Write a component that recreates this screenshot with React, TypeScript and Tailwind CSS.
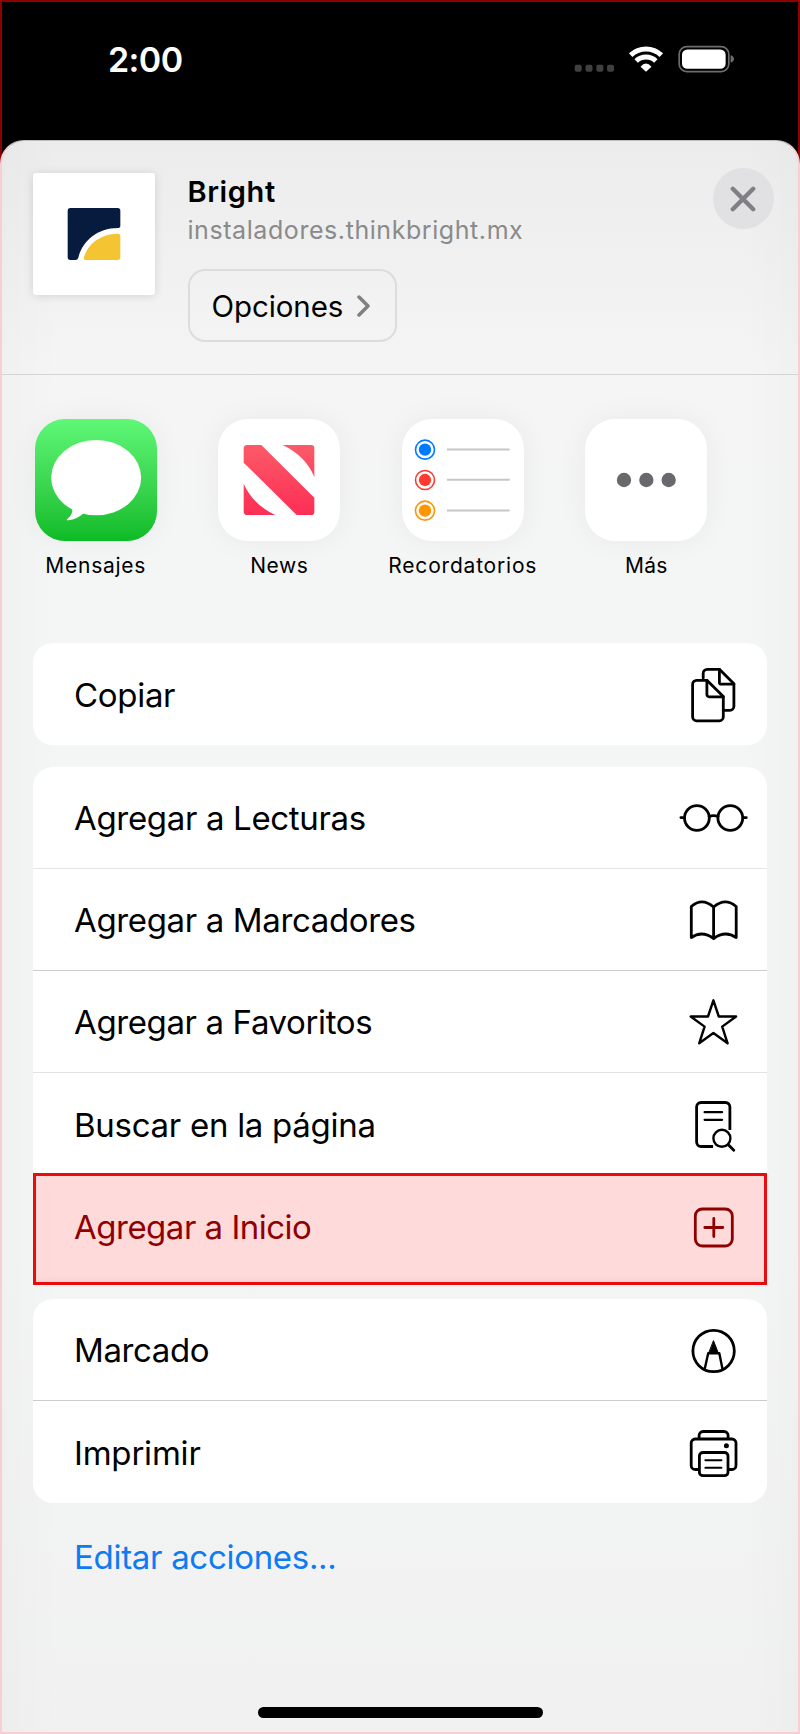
import type { ReactNode } from "react";

function StatusIcons() {
  return (
    <svg viewBox="515 130 495 95" className="mt-[41.3px] h-[31.67px] w-[165px]" fill="none">
      {[523, 555.5, 588, 620].map((x) => (
        <rect key={x} x={x} y="195" width="21" height="21" rx="6" fill="#404040" />
      ))}
      <path d="M691 166.5a66 66 0 0 1 92 0" stroke="#fff" strokeWidth="15" />
      <path d="M707.5 184a43 43 0 0 1 59 0" stroke="#fff" strokeWidth="15" />
      <path d="M737 216.5L720.5 201Q737 182 753.5 201Z" fill="#fff" />
      <rect x="836.5" y="141" width="149" height="75" rx="23" stroke="#6c6c6c" strokeWidth="5" />
      <rect x="845" y="149.5" width="131" height="58" rx="16" fill="#fff" />
      <path d="M991 167q10 3 10 11t-10 11Z" fill="#6c6c6c" />
    </svg>
  );
}

function Logo() {
  return (
    <svg viewBox="98 519 366 366" className="size-full">
      <path
        fill="#071b3f"
        d="M210 624H352a8 8 0 0 1 8 8V677q0 7-8 7C290 684 245 725 234 773q-2 7-9 7H210a8 8 0 0 1-8-8V632a8 8 0 0 1 8-8Z"
      />
      <path
        fill="#f5c433"
        d="M352 701a8 8 0 0 1 8 8V772a8 8 0 0 1-8 8H256q-7 0-5-8C262 732 300 702 352 701Z"
      />
    </svg>
  );
}

function MessagesIcon() {
  return (
    <svg viewBox="105 57 365 366" className="size-full" fill="#fff">
      <ellipse cx="288" cy="233" rx="135" ry="113" />
      <path d="M217 322Q219 344 200 358Q199 361 204 361Q232 357 252 338Z" />
    </svg>
  );
}

function NewsIcon() {
  return (
    <svg viewBox="656 57 366 366" className="size-full">
      <defs>
        <linearGradient id="news" gradientUnits="userSpaceOnUse" x1="0" y1="135" x2="0" y2="345">
          <stop stopColor="#fb5a68" />
          <stop offset="1" stopColor="#fd2e55" />
        </linearGradient>
      </defs>
      <g fill="url(#news)">
        <path d="M744 135H786L945 293V335a10 10 0 0 1-10 10H892L733 188V145a10 10 0 0 1 11-10Z" />
        <path d="M850 135H935a10 10 0 0 1 10 10V231Q919 168 850 135Z" />
        <path d="M733 251Q762 315 828 345H744a10 10 0 0 1-11-10Z" />
      </g>
    </svg>
  );
}

const REMINDERS = [
  { y: 149, color: "#007aff" },
  { y: 240, color: "#ff3b30" },
  { y: 332, color: "#ff9500" },
];

function RemindersIcon() {
  return (
    <svg viewBox="67 57 366 366" className="size-full" fill="none">
      {REMINDERS.map(({ y, color }) => (
        <g key={y}>
          <circle cx="136" cy={y} r="28.5" stroke={color} strokeWidth="4.8" />
          <circle cx="136" cy={y} r="18.5" fill={color} />
          <path d={`M202 ${y - 0.5}H390`} stroke="#c6c6c8" strokeWidth="6" />
        </g>
      ))}
    </svg>
  );
}

function MoreIcon() {
  return (
    <svg viewBox="617 57 366 366" className="size-full" fill="#68686d">
      <circle cx="734" cy="240" r="21.5" />
      <circle cx="801" cy="240" r="21.5" />
      <circle cx="868" cy="240" r="21.5" />
    </svg>
  );
}

function Glyph({ box, children }: { box: string; children: ReactNode }) {
  return (
    <svg
      viewBox={box}
      className="h-[60px] w-[72px] shrink-0"
      fill="none"
      stroke="currentColor"
      strokeWidth="2.8"
      strokeLinecap="round"
      strokeLinejoin="round"
    >
      {children}
    </svg>
  );
}

const copyIcon = (
  <Glyph box="678.4 664 72 60">
    <path d="M697 680.3H707.3L723.7 696.5V716.8a4 4 0 0 1-4 4H697a4 4 0 0 1-4-4V684.3a4 4 0 0 1 4-4Z" />
    <path d="M707.3 680.3V694.5a2.3 2.3 0 0 0 2.3 2.3H723.7" />
    <path d="M703.6 678V673.3a4 4 0 0 1 4-4H719.8L734.3 683.8V706.3a4 4 0 0 1-4 4H725" />
    <path d="M719.8 669.3V682.2a2 2 0 0 0 2 2H734.3" />
  </Glyph>
);

const glassesIcon = (
  <Glyph box="678.4 788 72 60">
    <circle cx="697.3" cy="818" r="12.4" />
    <circle cx="730.7" cy="818" r="12.4" />
    <path d="M709.5 816.5Q714 814.6 718.5 816.5M681.3 817.6H684.5M743.5 817.6H746.7" />
  </Glyph>
);

const bookIcon = (
  <Glyph box="678.4 890 72 60">
    <path d="M691.7 906.5Q702.5 897 714 907Q725.5 897 736.6 906.5V937.5Q725.5 930 714 938.5Q702.5 930 691.7 937.5ZM714 907V938.5" />
  </Glyph>
);

const starIcon = (
  <Glyph box="678.2 992 72 60">
    <path
      strokeWidth="2.4"
      d="M713.6 1000.3L719 1016.5H736.3L722.4 1026.6L727.8 1043.3L713.6 1033L699.4 1043.3L704.8 1026.6L690.9 1016.5H708.2Z"
    />
  </Glyph>
);

const findIcon = (
  <Glyph box="678.4 1094 72 60">
    <path
      strokeLinecap="butt"
      d="M730.3 1130V1107a4.5 4.5 0 0 0-4.5-4.5H701.5a4.5 4.5 0 0 0-4.500 4.5V1142a4.500 4.500 0 0 0 4.500 4.500H713.500"
    />
    <path strokeWidth="2.2" d="M705 1112.2H722.5M705 1119.8H722.5" />
    <circle cx="722.3" cy="1138.3" r="8.5" strokeWidth="2.4" />
    <path d="M728.7 1144.7L734.2 1150.3" />
  </Glyph>
);

const addIcon = (
  <Glyph box="678.2 1197 72 60">
    <rect x="695.5" y="1209" width="37" height="37" rx="7" />
    <path d="M705 1227.5H723M714 1218.5V1236.5" />
  </Glyph>
);

const markupIcon = (
  <Glyph box="678.4 1320 72 60">
    <circle cx="714" cy="1351" r="20.700" />
    <path strokeWidth="1" fill="currentColor" d="M714 1341L718.9 1353.5H709.2Z" />
    <path strokeLinecap="butt" strokeWidth="2.4" d="M705 1369.5L708.6 1353.2H719.7L723 1369.5" />
  </Glyph>
);

const printIcon = (
  <Glyph box="678.4 1422 72 60">
    <path d="M699.5 1438V1435.5a4 4 0 0 1 4-4H724.5a4 4 0 0 1 4 4V1438" />
    <path d="M698.5 1469.5H695.6a4 4 0 0 1-4-4V1443a4 4 0 0 1 4-4H732.4a4 4 0 0 1 4 4V1465.5a4 4 0 0 1-4 4H729.5" />
    <rect x="699.8" y="1452.5" width="28.6" height="23.2" rx="3.500" />
    <path strokeWidth="2" d="M705.8 1460.2H721.8M705.8 1467.7H721.8" />
    <circle cx="726.8" cy="1445.8" r="2.500" fill="currentColor" stroke="none" />
  </Glyph>
);

function Row({
  label,
  icon,
  className,
  inset = "pl-[41px] pr-[17px]",
}: {
  label: string;
  icon: ReactNode;
  className: string;
  inset?: string;
}) {
  return (
    <div className={`flex items-center justify-between text-[33px] ${inset} ${className}`}>
      <span className="pt-px leading-[40px] whitespace-nowrap">{label}</span>
      {icon}
    </div>
  );
}

function AppTile({ label, tracking, bg, children }: { label: string; tracking: string; bg: string; children: ReactNode }) {
  return (
    <div className="flex w-[183.5px] flex-col items-center">
      <div className={`size-[122px] overflow-hidden rounded-[30px] shadow-[0_0_30px_rgba(0,0,0,0.05)] ${bg}`}>
        {children}
      </div>
      <span className={`mt-[11px] text-[21px] leading-[28px] ${tracking}`}>{label}</span>
    </div>
  );
}

export default function App() {
  return (
    <div className="flex h-[1734px] w-[800px] flex-col overflow-hidden bg-[linear-gradient(to_right,#8f0000_2px,#000_2px,#000_798px,#8f0000_798px)] font-['Inter',sans-serif] text-black">
      <header className="flex h-[140px] shrink-0 items-start justify-between border-t-2 border-[#8f0000] pr-[63.3px] pl-[108px]">
        <span className="mt-[38px] text-[34px] leading-[40px] font-semibold tracking-[-0.6px] text-white">2:00</span>
        <StatusIcons />
      </header>

      <main className="flex flex-1 flex-col rounded-t-[24px] border-x-2 border-t border-b-2 border-[#f8cfd0] border-t-[#bdbdbd] bg-[linear-gradient(to_right,rgba(0,0,0,0.015),transparent_7%,transparent_93%,rgba(0,0,0,0.015)),linear-gradient(to_bottom,#ececec,#f5f5f5_240px,#f4f5f5_1100px,#f0f1f0)]">
        <section className="flex h-[234px] items-start border-b border-[#d4d4d5] pt-[32px] pr-[24.5px] pl-[30.5px]">
          <div className="size-[122px] shrink-0 rounded-[3px] bg-white shadow-[0_1px_10px_rgba(0,0,0,0.13)]">
            <Logo />
          </div>
          <div className="ml-[33px] flex flex-1 flex-col items-start">
            <h1 className="mt-px text-[29px] leading-[36px] font-semibold tracking-[0.6px]">Bright</h1>
            <p className="mt-[4px] text-[25px] leading-[32px] tracking-[0.57px] text-[#8a8a8b]">instaladores.thinkbright.mx</p>
            <button className="mt-[23px] flex h-[73px] w-[209px] items-center rounded-[17px] border-2 border-[#dcdcdc] pl-[22px]">
              <span className="pt-px text-[29.5px] leading-[40px] tracking-[-0.1px]">Opciones</span>
              <svg viewBox="0 0 14 22" className="ml-[13.5px] h-[22px] w-[14px]" fill="none" stroke="#808081" strokeWidth="3.5" strokeLinecap="round" strokeLinejoin="round">
                <path d="M2 2L11 11L2 20" />
              </svg>
            </button>
          </div>
          <button aria-label="Cerrar" className="-mt-[5px] flex size-[61px] items-center justify-center rounded-full bg-[#e1e1e3]">
            <svg viewBox="0 0 26 26" className="size-[26px]" stroke="#808084" strokeWidth="4.4" strokeLinecap="round">
              <path d="M2.8 2.800L23.2 23.2M23.2 2.8L2.8 23.2" />
            </svg>
          </button>
        </section>

        <nav className="flex pt-[44px] pl-[2px]">
          <AppTile label="Mensajes" tracking="tracking-[0.75px]" bg="bg-linear-to-b from-[#5ef777] to-[#0abb25]">
            <MessagesIcon />
          </AppTile>
          <AppTile label="News" tracking="tracking-[0.5px]" bg="bg-white">
            <NewsIcon />
          </AppTile>
          <AppTile label="Recordatorios" tracking="tracking-[0.8px]" bg="bg-white">
            <RemindersIcon />
          </AppTile>
          <AppTile label="Más" tracking="tracking-[0.3px]" bg="bg-white">
            <MoreIcon />
          </AppTile>
        </nav>

        <div className="mt-[63px] flex flex-col px-[31px]">
          <div className="overflow-hidden rounded-[20px] bg-white">
            <Row label="Copiar" icon={copyIcon} className="h-[102px] tracking-[-0.3px]" />
          </div>

          <div className="mt-[22px] rounded-t-[20px] bg-white">
            <Row label="Agregar a Lecturas" icon={glassesIcon} className="h-[102px] border-b border-[#e6e6e6] tracking-[-0.33px]" />
            <Row label="Agregar a Marcadores" icon={bookIcon} className="h-[102px] border-b border-[#cbcbcc] tracking-[-0.36px]" />
            <Row label="Agregar a Favoritos" icon={starIcon} className="h-[102px] border-b border-[#e2e2e2] tracking-[-0.38px]" />
            <Row label="Buscar en la página" icon={findIcon} className="h-[100px] pt-0.5 tracking-[-0.28px]" />
            <Row
              label="Agregar a Inicio"
              icon={addIcon}
              inset="pl-[38px] pr-[14px] pb-[5px]"
              className="h-[112px] border-3 border-[#ea0b0e] bg-[linear-gradient(#ffdada_94%,#fbd1d2)] tracking-[-0.5px] text-[#8f0000]"
            />
          </div>

          <div className="mt-[14px] overflow-hidden rounded-[20px] bg-white">
            <Row label="Marcado" icon={markupIcon} className="h-[102px] border-b border-[#cbcbcc] tracking-[-0.4px]" />
            <Row label="Imprimir" icon={printIcon} className="h-[102px] tracking-[-0.2px]" />
          </div>

          <button className="mt-[34px] ml-[41px] self-start text-[33px] leading-[40px] tracking-[-0.3px] text-[#0d7bf2]">
            Editar acciones...
          </button>
        </div>

        <div className="mx-auto mt-auto mb-[14px] h-[11px] w-[285px] rounded-full bg-black" />
      </main>
    </div>
  );
}
